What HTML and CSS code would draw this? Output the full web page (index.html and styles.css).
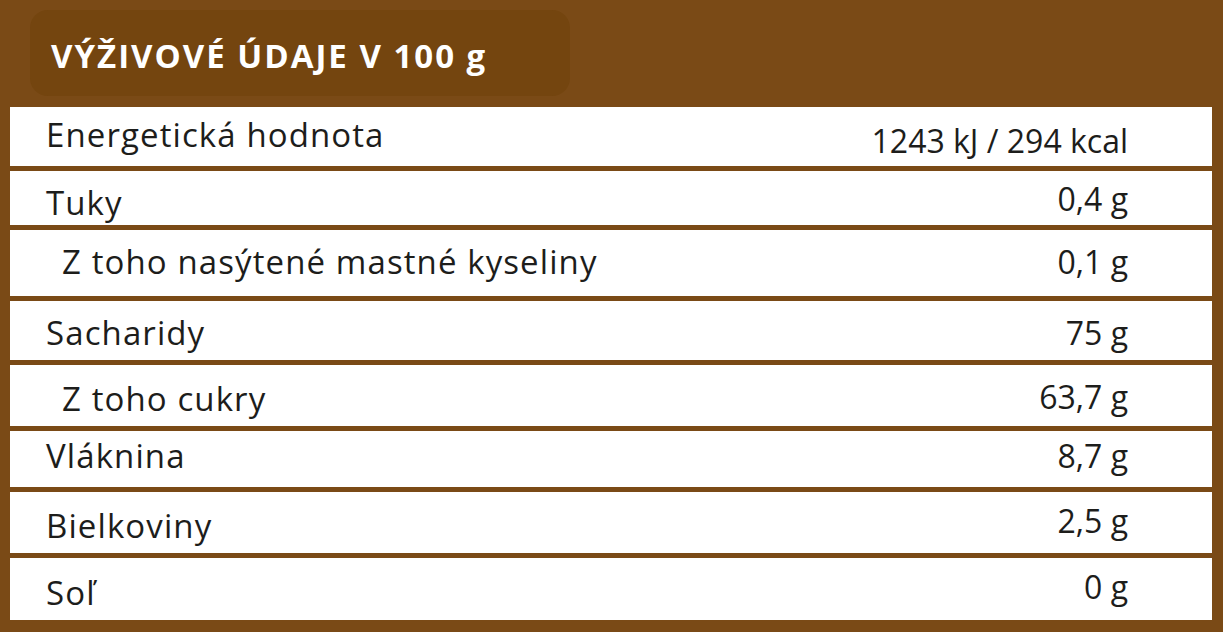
FILE: index.html
```html
<!DOCTYPE html>
<html lang="sk">
<head>
<meta charset="utf-8">
<title>Výživové údaje</title>
<link rel="stylesheet" href="styles.css">
</head>
<body>
<div class="panel">
  <header class="head">
    <div class="title">VÝŽIVOVÉ ÚDAJE V 100 g</div>
  </header>
  <div class="table">
    <div class="row r1"><span class="label">Energetická hodnota</span><span class="value">1243 kJ / 294 kcal</span></div>
    <div class="row r2"><span class="label">Tuky</span><span class="value">0,4 g</span></div>
    <div class="row r3"><span class="label sub">Z toho nasýtené mastné kyseliny</span><span class="value">0,1 g</span></div>
    <div class="row r4"><span class="label">Sacharidy</span><span class="value">75 g</span></div>
    <div class="row r5"><span class="label sub">Z toho cukry</span><span class="value">63,7 g</span></div>
    <div class="row r6"><span class="label">Vláknina</span><span class="value">8,7 g</span></div>
    <div class="row r7"><span class="label">Bielkoviny</span><span class="value">2,5 g</span></div>
    <div class="row r8"><span class="label">Soľ</span><span class="value">0 g</span></div>
  </div>
</div>
</body>
</html>
```
FILE: styles.css
```css
html, body {
  margin: 0;
  padding: 0;
}
body {
  background: #7a4a16;
  font-family: "Open Sans", "Noto Sans", sans-serif;
  width: 1223px;
  height: 632px;
  overflow: hidden;
}
.panel {
  padding: 0 11px 11px 10px;
}
.head {
  height: 107px;
  box-sizing: border-box;
  padding: 10px 0 0 20px;
}
.title {
  width: 540px;
  height: 86px;
  box-sizing: border-box;
  border-radius: 18px;
  background: #74450f;
  color: #ffffff;
  font-weight: 700;
  font-size: 33px;
  letter-spacing: 2px;
  display: flex;
  align-items: center;
  padding: 5px 0 0 21px;
}
.table {
  display: flex;
  flex-direction: column;
  gap: 5px;
}
.row {
  background: #ffffff;
  display: flex;
  justify-content: space-between;
  align-items: flex-start;
  padding: 0 84px 0 36px;
  font-size: 32px;
  line-height: 32px;
  color: #1d1d1b;
}
.label {
  font-size: 33px;
  letter-spacing: 1.1px;
}
.label.sub {
  padding-left: 16px;
}
.r1 { height: 59px; }
.r1 .label { padding-top: 12px; }
.r1 .value { padding-top: 18px; }
.r2 { height: 54px; }
.r2 .label { padding-top: 16px; }
.r2 .value { padding-top: 12px; }
.r3 { height: 66px; }
.r3 .label, .r3 .value { padding-top: 16px; }
.r4 { height: 59px; }
.r4 .label, .r4 .value { padding-top: 16px; }
.r5 { height: 61px; }
.r5 .label { padding-top: 18px; }
.r5 .value { padding-top: 16px; }
.r6 { height: 56px; }
.r6 .label, .r6 .value { padding-top: 9px; }
.r7 { height: 61px; }
.r7 .label { padding-top: 18px; }
.r7 .value { padding-top: 13px; }
.r8 { height: 62px; }
.r8 .label { padding-top: 19px; }
.r8 .value { padding-top: 13px; }
```
